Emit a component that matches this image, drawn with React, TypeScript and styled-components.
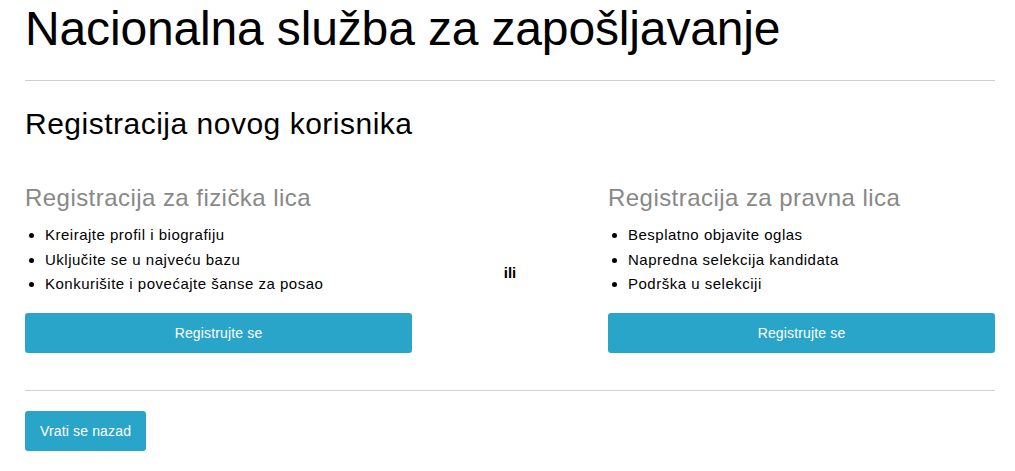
import React from 'react';
import styled, { createGlobalStyle } from 'styled-components';

const GlobalStyle = createGlobalStyle`
  html, body {
    margin: 0;
    padding: 0;
    background: #fff;
  }
  body {
    font-family: "Liberation Sans", Arial, sans-serif;
    color: #000;
  }
`;

const Page = styled.div`
  padding: 0 20px 0 25px;
  width: 970px;
`;

const Title = styled.h1`
  margin: 2px 0 25px;
  font-size: 48px;
  font-weight: 400;
  line-height: 53px;
  letter-spacing: -0.15px;
`;

const Rule = styled.hr`
  margin: 0;
  border: 0;
  border-top: 1px solid #cfcfcf;
`;

const Subtitle = styled.h2`
  margin: 27px 0 46px;
  font-size: 30px;
  font-weight: 400;
  line-height: 31px;
  letter-spacing: 0.5px;
`;

const Columns = styled.div`
  display: grid;
  grid-template-columns: 387px 1fr 387px;
  margin-bottom: 37px;
`;

const Column = styled.div`
  display: flex;
  flex-direction: column;
`;

const ColumnTitle = styled.h3`
  margin: 0 0 12px;
  font-size: 24px;
  font-weight: 400;
  line-height: 26px;
  letter-spacing: 0.45px;
  color: #888;
`;

const Features = styled.ul`
  margin: 0 0 16px;
  padding-left: 20px;
  font-size: 15px;
  line-height: 24.5px;
  letter-spacing: 0.5px;
`;

const Or = styled.div`
  align-self: center;
  justify-self: center;
  font-size: 15px;
  font-weight: 700;
  padding-top: 8px;
`;

const Button = styled.button<{ $wide?: boolean }>`
  display: block;
  width: ${(props) => (props.$wide ? '100%' : 'auto')};
  height: 40px;
  padding: 0 15px;
  border: 0;
  border-radius: 3px;
  background: #2aa5ca;
  color: #fff;
  font-family: "Liberation Sans", Arial, sans-serif;
  font-size: 14px;
  letter-spacing: 0.15px;
  cursor: pointer;
`;

const Footer = styled.div`
  padding-top: 20px;
`;

function Registration(props: { title: string; items: string[] }) {
  return (
    <Column>
      <ColumnTitle>{props.title}</ColumnTitle>
      <Features>
        {props.items.map((item) => (
          <li key={item}>{item}</li>
        ))}
      </Features>
      <Button $wide>Registrujte se</Button>
    </Column>
  );
}

export default function App() {
  return (
    <Page>
      <GlobalStyle />
      <Title>Nacionalna služba za zapošljavanje</Title>
      <Rule />
      <Subtitle>Registracija novog korisnika</Subtitle>
      <Columns>
        <Registration
          title="Registracija za fizička lica"
          items={['Kreirajte profil i biografiju', 'Uključite se u najveću bazu', 'Konkurišite i povećajte šanse za posao']}
        />
        <Or>ili</Or>
        <Registration
          title="Registracija za pravna lica"
          items={['Besplatno objavite oglas', 'Napredna selekcija kandidata', 'Podrška u selekciji']}
        />
      </Columns>
      <Rule />
      <Footer>
        <Button>Vrati se nazad</Button>
      </Footer>
    </Page>
  );
}
